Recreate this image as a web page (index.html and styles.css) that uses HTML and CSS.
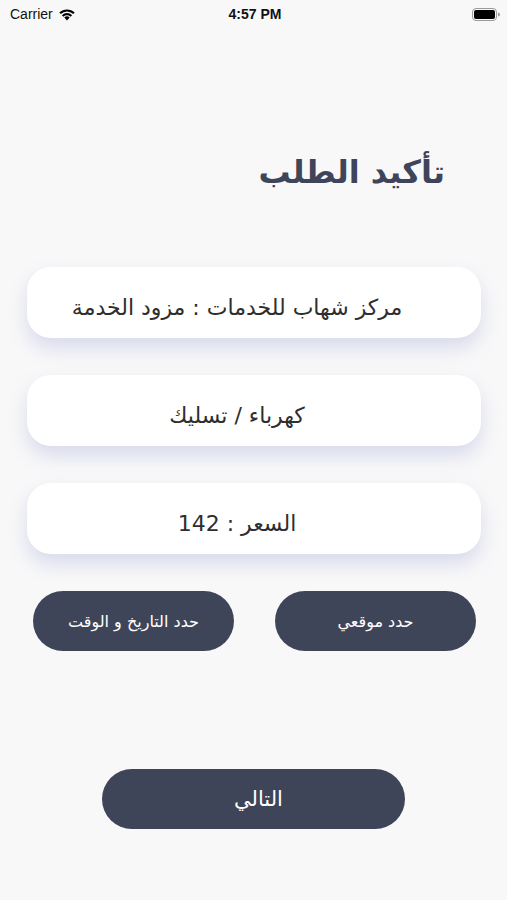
FILE: index.html
```html
<!DOCTYPE html>
<html lang="ar">
<head>
<meta charset="utf-8">
<link rel="stylesheet" href="styles.css">
</head>
<body>
<div class="screen">
  <div class="status">
    <div class="status-left">
      <span>Carrier</span>
      <svg class="wifi" width="18" height="13" viewBox="0 0 18 13">
        <path d="M9 12.5 L6.3 9.6 A3.9 3.9 0 0 1 11.7 9.6 Z" fill="#000"/>
        <path d="M3.9 7.2 A7.3 7.3 0 0 1 14.1 7.2 L12.6 8.7 A5.2 5.2 0 0 0 5.4 8.7 Z" fill="#000"/>
        <path d="M1.3 4.6 A11 11 0 0 1 16.7 4.6 L15.2 6.1 A8.9 8.9 0 0 0 2.8 6.1 Z" fill="#000"/>
      </svg>
    </div>
    <div class="status-time">4:57 PM</div>
    <div class="status-right">
      <svg width="28" height="13" viewBox="0 0 28 13">
        <rect x="0.5" y="0.5" width="24" height="12" rx="3.5" fill="none" stroke="#9a9a9a"/>
        <rect x="2" y="2" width="21" height="9" rx="2" fill="#000"/>
        <path d="M26 4.5 A2 2 0 0 1 26 8.5 Z" fill="#9a9a9a"/>
      </svg>
    </div>
  </div>

  <h1 class="title">تأكيد الطلب</h1>

  <div class="cards">
    <div class="card"><span>مركز شهاب للخدمات : مزود الخدمة</span></div>
    <div class="card"><span>كهرباء / تسليك</span></div>
    <div class="card"><span>السعر : 142</span></div>
  </div>

  <div class="actions">
    <button class="btn">حدد موقعي</button>
    <button class="btn">حدد التاريخ و الوقت</button>
  </div>

  <div class="next-wrap">
    <button class="btn next">التالي</button>
  </div>
</div>
</body>
</html>
```

FILE: styles.css
```css
* { box-sizing: border-box; }
html, body {
  margin: 0;
  padding: 0;
  background: #f8f8f9;
}
body {
  font-family: "DejaVu Sans", "Noto Sans", sans-serif;
  width: 507px;
  height: 900px;
  overflow: hidden;
}
.screen {
  display: flex;
  flex-direction: column;
}
.status {
  height: 28px;
  display: grid;
  grid-template-columns: 1fr auto 1fr;
  align-items: center;
  padding: 0 7px 0 10px;
  font-family: "Liberation Sans", Arial, sans-serif;
  font-size: 14px;
  color: #111;
}
.status-left {
  display: flex;
  align-items: center;
  gap: 5px;
}
.status-time {
  font-weight: bold;
  font-size: 14px;
}
.status-right {
  display: flex;
  justify-content: flex-end;
}
.title {
  direction: rtl;
  margin: 122px 62px 0 0;
  font-size: 32px;
  font-weight: bold;
  color: #3e4459;
  line-height: 44px;
  text-align: right;
}
.cards {
  display: flex;
  flex-direction: column;
  gap: 37px;
  margin: 73px 26px 0 27px;
}
.card {
  height: 71px;
  background: #fff;
  border-radius: 24px;
  box-shadow: 0 10px 18px rgba(180, 184, 220, 0.45);
  display: flex;
  align-items: center;
  justify-content: center;
  padding: 10px 34px 0 0;
  direction: rtl;
  font-size: 22px;
  color: #2e2e2e;
}
.actions {
  direction: rtl;
  display: flex;
  justify-content: space-between;
  margin: 37px 31px 0 33px;
}
.btn {
  font-family: "DejaVu Sans", "Noto Sans", sans-serif;
  border: none;
  background: #3f4559;
  color: #fff;
  height: 60px;
  width: 201px;
  border-radius: 30px;
  font-size: 16px;
  direction: rtl;
  padding: 0;
}
.next-wrap {
  display: flex;
  justify-content: center;
  margin-top: 118px;
}
.next {
  width: 303px;
  font-size: 21px;
  padding: 0 0 0 10px;
}
```
